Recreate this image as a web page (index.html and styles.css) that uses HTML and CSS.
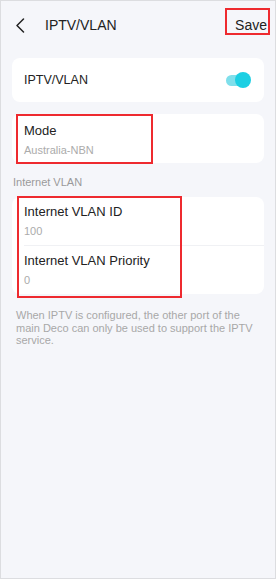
FILE: index.html
```html
<!DOCTYPE html>
<html>
<head>
<meta charset="utf-8">
<link rel="stylesheet" href="styles.css">
</head>
<body>
<div class="screen">
  <header class="topbar">
    <span class="back">
      <svg width="10" height="15" viewBox="0 0 10 15"><path d="M8.5 1 L2 7.5 L8.5 14" fill="none" stroke="#222" stroke-width="1.5" stroke-linecap="round" stroke-linejoin="round"/></svg>
    </span>
    <span class="title">IPTV/VLAN</span>
    <span class="save">Save</span>
  </header>
  <main class="content">
    <div class="card card-toggle">
      <span class="label label-sm">IPTV/VLAN</span>
      <span class="switch"><span class="knob"></span></span>
    </div>
    <div class="card card-mode">
      <div class="label">Mode</div>
      <div class="value">Australia-NBN</div>
    </div>
    <div class="section">Internet VLAN</div>
    <div class="card card-list">
      <div class="row">
        <div class="label">Internet VLAN ID</div>
        <div class="value">100</div>
      </div>
      <div class="row">
        <div class="label">Internet VLAN Priority</div>
        <div class="value">0</div>
      </div>
    </div>
    <p class="note">When IPTV is configured, the other port of the main Deco can only be used to support the IPTV service.</p>
  </main>
  <div class="mark mark-save"></div>
  <div class="mark mark-mode"></div>
  <div class="mark mark-vlan"></div>
</div>
</body>
</html>
```
FILE: styles.css
```css
* { box-sizing: border-box; }
html, body { margin: 0; padding: 0; background: #fff; }
body { font-family: "Liberation Sans", Arial, sans-serif; color: #222; }
.screen {
  position: relative;
  width: 276px;
  height: 579px;
  border: 1px solid #dcdde0;
  background: #f5f6fa;
  overflow: hidden;
}
.topbar {
  height: 48px;
  display: flex;
  align-items: center;
  padding: 0 8px 0 14px;
}
.back { width: 10px; height: 15px; display: flex; }
.title { margin-left: 20px; font-size: 14px; color: #222; flex: 1; }
.save { font-size: 14px; color: #222; }
.content { padding: 9px 11px 0 11px; }
.card { background: #fff; border-radius: 8px; }
.card-toggle {
  height: 44px;
  display: flex;
  align-items: center;
  justify-content: space-between;
  padding: 0 14px 0 12px;
}
.label { font-size: 13px; line-height: 16px; color: #222; }
.label-sm { font-size: 12.5px; }
.value { font-size: 11px; line-height: 14px; color: #ababab; margin-top: 4px; }
.switch {
  position: relative;
  width: 24px;
  height: 11px;
  border-radius: 6px;
  background: #7fdfeb;
}
.knob {
  position: absolute;
  right: -1px;
  top: -3px;
  width: 16px;
  height: 16px;
  border-radius: 50%;
  background: #1ccfe3;
}
.card-mode { margin-top: 12px; height: 49px; padding: 9px 12px 0; }
.section { font-size: 11px; line-height: 14px; color: #9a9a9a; padding: 12px 0 8px 1px; }
.card-list { padding: 0 0 0 12px; }
.row { padding: 7px 0; height: 48px; }
.row + .row { border-top: 1px solid #f0f1f4; height: 49px; }
.note {
  margin: 15px 0 0;
  padding: 0 8px 0 4px;
  font-size: 11px;
  line-height: 12.5px;
  color: #a8a8a8;
}
.mark { position: absolute; border: 2px solid #ee2a2f; }
.mark-save { left: 224px; top: 7px; width: 45px; height: 27px; }
.mark-mode { left: 15px; top: 113px; width: 137px; height: 50px; }
.mark-vlan { left: 16px; top: 195px; width: 165px; height: 102px; }
```
